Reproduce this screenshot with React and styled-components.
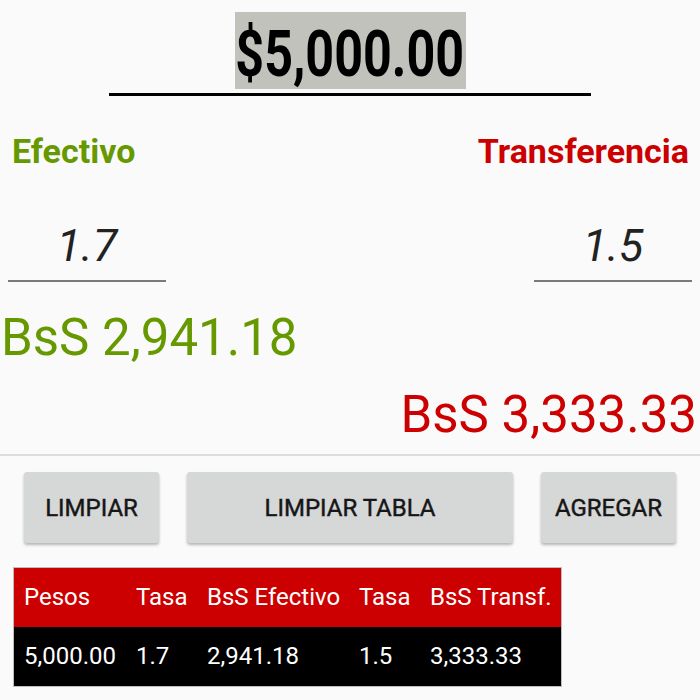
import React from "react";
import styled, { createGlobalStyle } from "styled-components";

const GlobalStyle = createGlobalStyle`
  body {
    margin: 0;
    background: #fafafa;
    font-family: Roboto, "Liberation Sans", sans-serif;
  }
`;

const GREEN = "#669900";
const RED = "#cc0000";

const Page = styled.div`
  width: 700px;
  height: 700px;
  padding-top: 12px;
  box-sizing: border-box;
  overflow: hidden;
`;

const AmountBar = styled.div`
  display: flex;
  justify-content: center;
`;

const Highlight = styled.div`
  width: 231px;
  height: 77px;
  padding-top: 8px;
  box-sizing: border-box;
  background: #c2c2bd;
  display: flex;
  justify-content: center;
  overflow: visible;
`;

// the amount is drawn condensed in the original app
const AmountText = styled.span`
  display: inline-block;
  font-size: 64px;
  font-weight: 700;
  line-height: 69px;
  color: #000;
  white-space: nowrap;
  transform: scaleX(0.785);
`;

const AmountRule = styled.div`
  width: 482px;
  height: 3px;
  margin: 4px auto 0;
  background: #000;
`;

const Labels = styled.div`
  display: flex;
  justify-content: space-between;
  margin-top: 35px;
  padding: 0 11px 0 12px;
`;

const Label = styled.span`
  font-size: 34px;
  font-weight: 700;
  line-height: 40px;
  color: ${(p) => p.$color};
`;

const Inputs = styled.div`
  display: flex;
  justify-content: space-between;
  margin-top: 44px;
  padding: 0 8px;
`;

const RateInput = styled.input`
  width: 158px;
  height: 67px;
  padding: 0 0 5px;
  box-sizing: border-box;
  border: none;
  border-bottom: 2px solid #7a7a7a;
  background: transparent;
  font-family: Roboto, "Liberation Sans", sans-serif;
  font-size: 45px;
  font-style: italic;
  font-weight: 400;
  color: #222;
  text-align: center;
  outline: none;
`;

const Result = styled.div`
  margin-top: ${(p) => p.$top}px;
  padding: 0 3px 0 1px;
  font-size: 51px;
  line-height: 60px;
  color: ${(p) => p.$color};
  text-align: ${(p) => p.$align};
`;

const Divider = styled.div`
  height: 2px;
  margin-top: 9px;
  background: #dcdcdc;
`;

const Buttons = styled.div`
  display: flex;
  gap: 28px;
  margin-top: 16px;
  padding: 0 24px;
`;

const Button = styled.button`
  flex: ${(p) => (p.$wide ? 1 : "0 0 135px")};
  height: 71px;
  border: none;
  border-radius: 3px;
  background: #d6d7d7;
  box-shadow: 0 2px 3px rgba(0, 0, 0, 0.28);
  font-family: Roboto, "Liberation Sans", sans-serif;
  font-size: 24px;
  font-weight: 400;
  -webkit-text-stroke: 0.45px #161616;
  color: #161616;
  text-transform: uppercase;
  padding: 0;
`;

const Table = styled.div`
  display: grid;
  grid-template-columns: 112px 71px 152px 71px 141px;
  width: 549px;
  margin: 24px 0 0 13px;
  border: 1px solid #bdbdbd;
  box-sizing: border-box;
`;

const Cell = styled.div`
  height: 59px;
  line-height: 59px;
  padding-left: 10px;
  font-size: 24px;
  color: #fff;
  white-space: nowrap;
  background: ${(p) => (p.$head ? RED : "#000")};
`;

const headers = ["Pesos", "Tasa", "BsS Efectivo", "Tasa", "BsS Transf."];
const rows = [["5,000.00", "1.7", "2,941.18", "1.5", "3,333.33"]];

export default function App() {
  return (
    <Page>
      <GlobalStyle />
      <AmountBar>
        <Highlight>
          <AmountText>$5,000.00</AmountText>
        </Highlight>
      </AmountBar>
      <AmountRule />

      <Labels>
        <Label $color={GREEN}>Efectivo</Label>
        <Label $color={RED}>Transferencia</Label>
      </Labels>
      <Inputs>
        <RateInput readOnly value="1.7" />
        <RateInput readOnly value="1.5" />
      </Inputs>

      <Result $top={26} $color={GREEN} $align="left">
        BsS 2,941.18
      </Result>
      <Result $top={17} $color={RED} $align="right">
        BsS 3,333.33
      </Result>
      <Divider />

      <Buttons>
        <Button>Limpiar</Button>
        <Button $wide>Limpiar Tabla</Button>
        <Button>Agregar</Button>
      </Buttons>

      <Table>
        {headers.map((h, i) => (
          <Cell $head key={"h" + i}>
            {h}
          </Cell>
        ))}
        {rows.map((r, ri) =>
          r.map((c, i) => <Cell key={ri + "-" + i}>{c}</Cell>)
        )}
      </Table>
    </Page>
  );
}
